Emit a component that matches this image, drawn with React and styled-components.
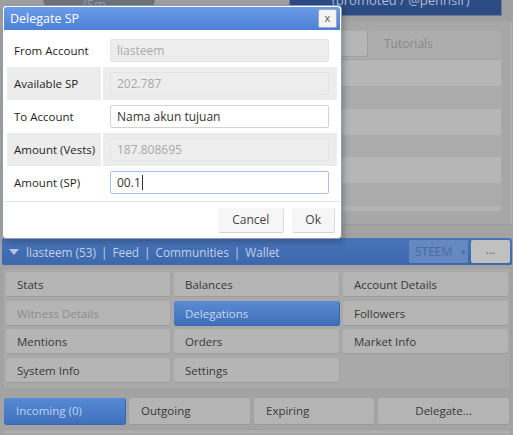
import React from "react";
import styled, { createGlobalStyle } from "styled-components";

const Global = createGlobalStyle`
  html, body { margin: 0; padding: 0; }
  body { font-family: "Open Sans", "Noto Sans", sans-serif; background: #a5a5a5; }
`;

const Page = styled.div`
  position: relative;
  width: 513px;
  height: 435px;
  overflow: hidden;
  background: #a3a3a3;
  display: flex;
  flex-direction: column;
`;

const TopArea = styled.div`
  height: 238px;
  display: flex;
  flex-direction: column;
`;

const TopStrip = styled.div`
  height: 20px;
  display: flex;
  align-items: flex-start;
  background: #a0a0a0;
`;

const Pill = styled.div`
  margin-left: 43px;
  width: 112px;
  height: 8px;
  border-radius: 0 0 14px 14px;
  background: #6f7278;
  overflow: hidden;
  color: #9aa0aa;
  font-size: 13px;
  line-height: 8px;
  padding-left: 40px;
  box-sizing: border-box;
`;

const PromoBox = styled.div`
  margin-left: auto;
  margin-right: 11px;
  width: 213px;
  height: 16px;
  background: #2b4b84;
  border: 1px solid #6b7a92;
  border-top: none;
  box-sizing: border-box;
  overflow: hidden;
  color: #aebad0;
  font-size: 13px;
  line-height: 14px;
  padding-left: 42px;
`;

const PromoText = styled.div`
  margin-top: -7px;
`;

const MidRow = styled.div`
  flex: 1;
  display: flex;
  padding-top: 2px;
`;

const LeftHidden = styled.div`
  width: 338px;
`;

const RightOuter = styled.div`
  width: 174px;
  height: 203px;
  background: #a7a7a7;
  border-right: 1px solid #b0b0b0;
  border-bottom: 1px solid #999;
  box-sizing: border-box;
  padding: 8px 9px 0 2px;
`;

const RightPanel = styled.div`
  height: 182px;
  background: #b3b3b3;
  border: 1px solid #a9a9a9;
  border-radius: 3px;
  box-sizing: border-box;
  display: flex;
  flex-direction: column;
`;

const PanelTabs = styled.div`
  height: 28px;
  display: flex;
  gap: 2px;
  background: #adadad;
  border-bottom: 1px solid #a2a2a2;
`;

const PanelTab = styled.div`
  width: ${(p) => p.w}px;
  height: 26px;
  background: ${(p) => (p.active ? "#b6b6b6" : "#adadad")};
  border-right: ${(p) => (p.active ? "1px solid #9f9f9f" : "none")};
  border-bottom: ${(p) => (p.active ? "1px solid #9f9f9f" : "none")};
  border-radius: 3px;
  color: #888;
  font-size: 12px;
  line-height: 26px;
  padding-left: 14px;
  box-sizing: border-box;
`;

const Stripe = styled.div`
  height: ${(p) => p.h}px;
  background: ${(p) => (p.dark ? "#ababab" : "#b6b6b6")};
`;

const BlueBar = styled.div`
  margin: 0 1px 0 2px;
  height: 27px;
  border-radius: 3px 3px 2px 2px;
  background: linear-gradient(#4874b9, #3c67ad);
  display: flex;
  align-items: center;
  padding-left: 7px;
  padding-right: 2px;
  color: #c3d0e6;
  font-size: 11.8px;
`;

const Caret = styled.span`
  width: 0;
  height: 0;
  border-left: 5px solid transparent;
  border-right: 5px solid transparent;
  border-top: 6px solid #b7c6e0;
  margin-right: 7px;
`;

const NavItem = styled.span`
  white-space: nowrap;
`;

const NavSep = styled.span`
  margin: 0 5px;
`;

const SelectBox = styled.div`
  margin-left: auto;
  width: 59px;
  height: 23px;
  background: #6688c0;
  color: #4a6aa0;
  font-size: 12px;
  line-height: 23px;
  padding-left: 6px;
  box-sizing: border-box;
  display: flex;
  gap: 9px;
  border-radius: 2px 0 0 2px;
`;

const Dot = styled.span`
  font-size: 8px;
`;

const MoreBtn = styled.div`
  margin-left: 3px;
  width: 39px;
  height: 23px;
  background: #c0c0c0;
  border-radius: 2px;
  color: #666;
  font-size: 12px;
  line-height: 20px;
  text-align: center;
`;

const GridPanel = styled.div`
  margin: 4px 2px 0 2px;
  padding: 3px 2px 5px 3px;
  background: #a9a9a9;
  border: 1px solid #9e9e9e;
  border-top: none;
  display: grid;
  grid-template-columns: 165px 166px 166px;
  grid-auto-rows: 25px;
  column-gap: 3px;
  row-gap: 3.5px;
`;

const GridBtn = styled.div`
  background: ${(p) => (p.active ? "linear-gradient(#5b8bd2, #3f6fb9)" : "#b5b5b5")};
  border-right: 1px solid ${(p) => (p.active ? "#3a66ad" : "#a3a3a3")};
  border-bottom: 1px solid ${(p) => (p.active ? "#3a66ad" : "#9c9c9c")};
  border-radius: 3px;
  color: ${(p) => (p.active ? "#c9d7ef" : p.disabled ? "#8c8c8c" : "#383838")};
  font-size: 11.5px;
  line-height: 25px;
  padding-left: 11px;
  box-sizing: border-box;
  white-space: nowrap;
`;

const TabsRow = styled.div`
  margin: 9px 3px 0 4px;
  display: grid;
  grid-template-columns: 122px 122px 121px 1fr;
  column-gap: 3px;
  height: 27px;
`;

const TabBtn = styled.div`
  background: ${(p) => (p.active ? "linear-gradient(#558ad6, #3f70bb)" : "#b4b4b4")};
  border-right: 1px solid ${(p) => (p.active ? "#3a66ad" : "#a2a2a2")};
  border-bottom: 1px solid ${(p) => (p.active ? "#3a66ad" : "#9b9b9b")};
  border-radius: 3px;
  color: ${(p) => (p.active ? "#c2d2ee" : "#383838")};
  font-size: 11.5px;
  line-height: 26px;
  padding-left: ${(p) => (p.center ? 0 : 12)}px;
  text-align: ${(p) => (p.center ? "center" : "left")};
  box-sizing: border-box;
`;

const BottomStrip = styled.div`
  margin: 4px 2px 0 2px;
  flex: 1;
  background: #acacac;
  border: 1px solid #9f9f9f;
`;

/* Dialog */
const Dialog = styled.div`
  position: absolute;
  left: 2px;
  top: 5px;
  width: 340px;
  height: 234px;
  background: #fff;
  border: 1px solid #8e9bb0;
  border-radius: 4px;
  box-sizing: border-box;
  box-shadow: 2px 3px 6px rgba(0, 0, 0, 0.25);
  display: flex;
  flex-direction: column;
  padding: 1px;
`;

const TitleBar = styled.div`
  height: 23px;
  border-radius: 3px 3px 0 0;
  background: linear-gradient(#6c9ce8, #4b80d4);
  display: flex;
  align-items: center;
  padding: 0 3px 0 6px;
  color: #fff;
  font-size: 12.5px;
`;

const CloseBtn = styled.div`
  margin-left: auto;
  width: 19px;
  height: 19px;
  background: #f4f4f4;
  border: 1px solid #9aa9c4;
  border-radius: 2px;
  box-sizing: border-box;
  color: #555;
  font-size: 11px;
  line-height: 16px;
  text-align: center;
`;

const Body = styled.div`
  padding: 4px 3px 0 3px;
  display: flex;
  flex-direction: column;
`;

const Row = styled.div`
  height: 33px;
  display: grid;
  grid-template-columns: 94px 1fr;
  column-gap: 2px;
`;

const LabelCell = styled.div`
  background: ${(p) => (p.shade ? "#ececec" : "#fff")};
  color: #1e1e1e;
  font-size: 11.5px;
  line-height: 33px;
  padding-left: 7px;
  white-space: nowrap;
`;

const InputCell = styled.div`
  background: ${(p) => (p.shade ? "#ececec" : "#fff")};
  display: flex;
  align-items: center;
  padding: 0 8px 0 7px;
`;

const Field = styled.div`
  flex: 1;
  height: 23px;
  box-sizing: border-box;
  border: 1px solid ${(p) => (p.focus ? "#a9c3e6" : p.disabled ? "#e4e4e4" : "#d2d2d2")};
  background: ${(p) => (p.disabled ? "#ededed" : "#fff")};
  border-radius: 2px;
  color: ${(p) => (p.disabled ? "#a8a8a8" : "#333")};
  font-size: 12px;
  line-height: 21px;
  padding-left: 6px;
  display: flex;
  align-items: center;
`;

const Cursor = styled.span`
  display: inline-block;
  width: 1px;
  height: 15px;
  background: #333;
  margin-left: 1px;
`;

const Footer = styled.div`
  margin-top: 2px;
  border-top: 1px solid #e2e2e2;
  flex: 1;
  display: flex;
  justify-content: flex-end;
  align-items: flex-start;
  gap: 8px;
  padding: 6px 5px 0 0;
`;

const DlgBtn = styled.div`
  height: 24px;
  padding: 0 ${(p) => p.px}px;
  background: #f6f6f6;
  border-right: 1px solid #dcdcdc;
  border-bottom: 1px solid #d2d2d2;
  border-radius: 2px;
  color: #444;
  font-size: 12px;
  line-height: 24px;
`;

const rows = [
  { label: "From Account", value: "liasteem", disabled: true },
  { label: "Available SP", value: "202.787", disabled: true, shade: true },
  { label: "To Account", value: "Nama akun tujuan" },
  { label: "Amount (Vests)", value: "187.808695", disabled: true, shade: true },
  { label: "Amount (SP)", value: "00.1", focus: true },
];

const gridItems = [
  { t: "Stats" },
  { t: "Balances" },
  { t: "Account Details" },
  { t: "Witness Details", disabled: true },
  { t: "Delegations", active: true },
  { t: "Followers" },
  { t: "Mentions" },
  { t: "Orders" },
  { t: "Market Info" },
  { t: "System Info" },
  { t: "Settings" },
];

const navItems = ["liasteem (53)", "Feed", "Communities", "Wallet"];

export default function App() {
  return (
    <>
      <Global />
      <Page>
        <TopArea>
          <TopStrip>
            <Pill>(Sm</Pill>
            <PromoBox>
              <PromoText>(promoted / @penhsir)</PromoText>
            </PromoBox>
          </TopStrip>
          <MidRow>
            <LeftHidden />
            <RightOuter>
              <RightPanel>
                <PanelTabs>
                  <PanelTab w={27} active />
                  <PanelTab w={128}>Tutorials</PanelTab>
                </PanelTabs>
                <Stripe h={26} />
                <Stripe h={23} dark />
                <Stripe h={26} />
                <Stripe h={22} dark />
                <Stripe h={26} />
                <Stripe h={23} dark />
              </RightPanel>
            </RightOuter>
          </MidRow>
        </TopArea>

        <BlueBar>
          <Caret />
          {navItems.map((n, i) => (
            <React.Fragment key={n}>
              {i > 0 && <NavSep>|</NavSep>}
              <NavItem>{n}</NavItem>
            </React.Fragment>
          ))}
          <SelectBox>
            STEEM <Dot>▾</Dot>
          </SelectBox>
          <MoreBtn>...</MoreBtn>
        </BlueBar>

        <GridPanel>
          {gridItems.map((g) => (
            <GridBtn key={g.t} active={g.active} disabled={g.disabled}>
              {g.t}
            </GridBtn>
          ))}
        </GridPanel>

        <TabsRow>
          <TabBtn active>Incoming (0)</TabBtn>
          <TabBtn>Outgoing</TabBtn>
          <TabBtn>Expiring</TabBtn>
          <TabBtn center>Delegate...</TabBtn>
        </TabsRow>
        <BottomStrip />

        <Dialog>
          <TitleBar>
            Delegate SP
            <CloseBtn>x</CloseBtn>
          </TitleBar>
          <Body>
            {rows.map((r) => (
              <Row key={r.label}>
                <LabelCell shade={r.shade}>{r.label}</LabelCell>
                <InputCell shade={r.shade}>
                  <Field disabled={r.disabled} focus={r.focus}>
                    {r.value}
                    {r.focus && <Cursor />}
                  </Field>
                </InputCell>
              </Row>
            ))}
          </Body>
          <Footer>
            <DlgBtn px={14}>Cancel</DlgBtn>
            <DlgBtn px={13}>Ok</DlgBtn>
          </Footer>
        </Dialog>
      </Page>
    </>
  );
}
